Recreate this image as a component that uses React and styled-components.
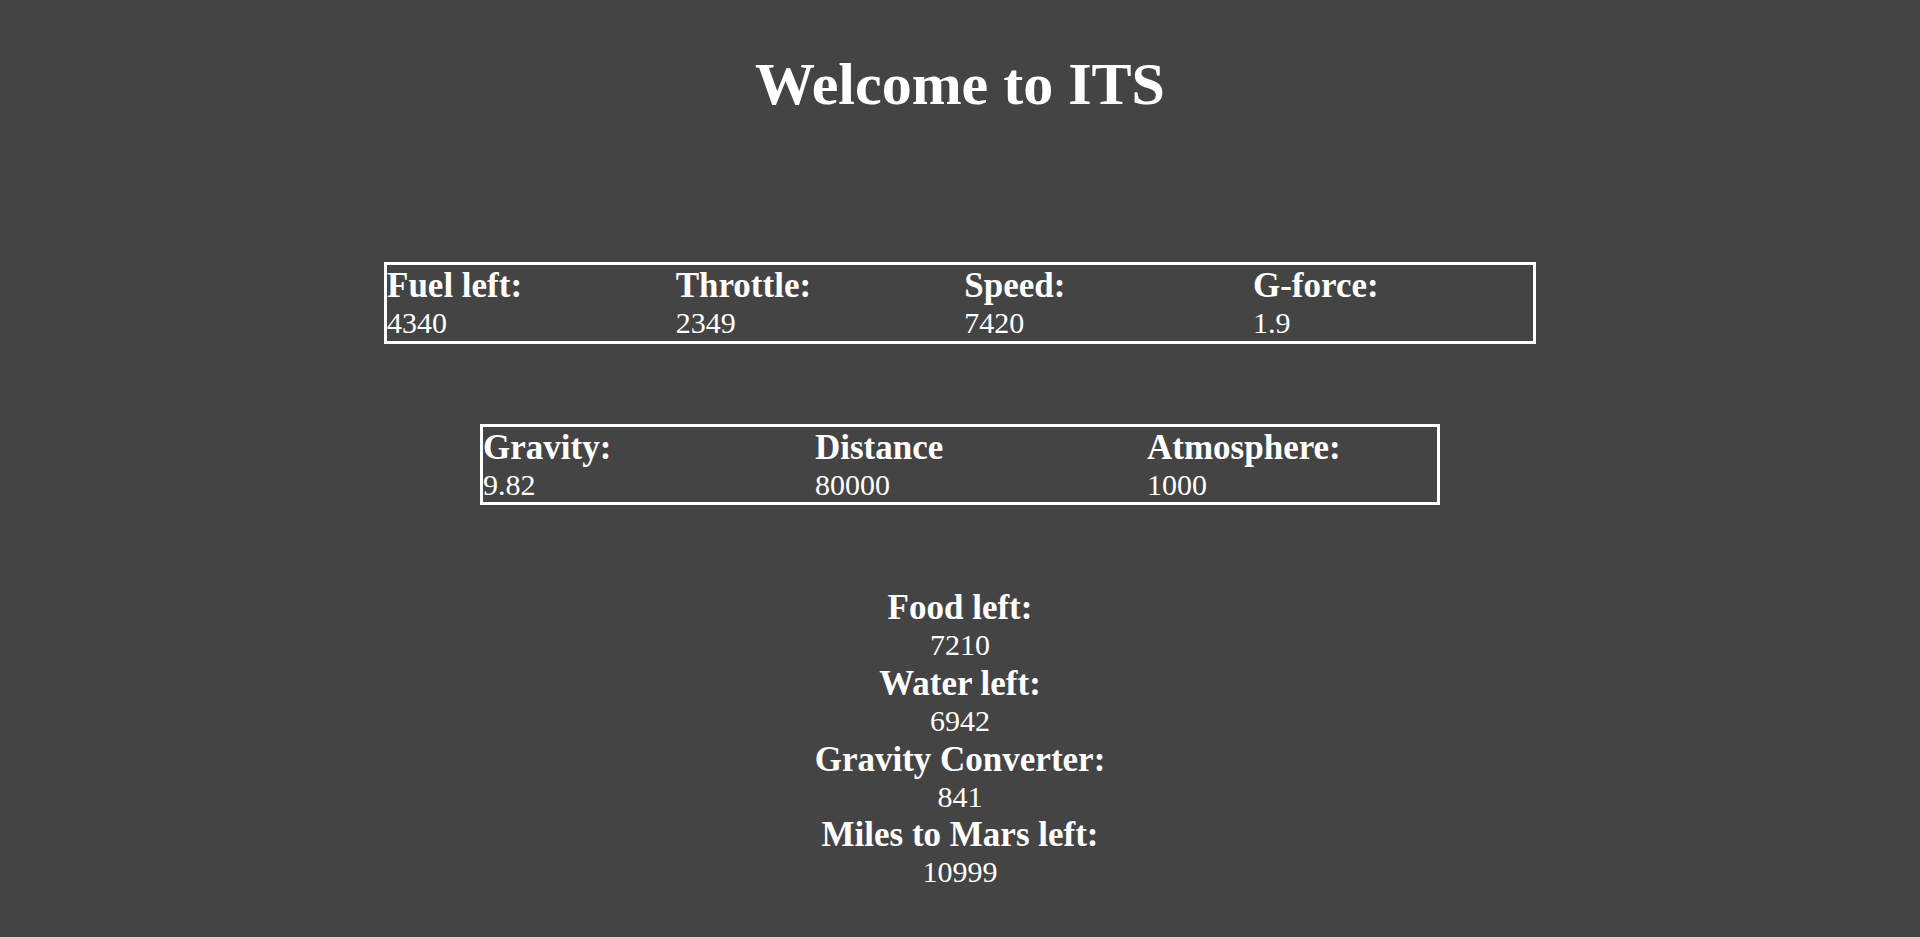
import React from 'react';
import styled, { createGlobalStyle } from 'styled-components';

const GlobalStyle = createGlobalStyle`
  html, body {
    margin: 0;
    padding: 0;
    background: #444444;
  }
  body {
    font-family: "Liberation Serif", "Times New Roman", serif;
    color: #ffffff;
  }
`;

const Page = styled.main`
  box-sizing: border-box;
  padding-top: 50px;
  display: flex;
  flex-direction: column;
  align-items: center;
`;

const Title = styled.h1`
  margin: 0;
  font-size: 60px;
  font-weight: 700;
  line-height: normal;
`;

const Panel = styled.section`
  box-sizing: border-box;
  width: ${(p) => p.$width};
  margin-top: ${(p) => p.$gap}px;
  border: 3px solid #ffffff;
  display: flex;
  justify-content: space-between;
`;

const Stat = styled.div`
  width: ${(p) => p.$w}px;
  display: flex;
  flex-direction: column;
  text-align: left;
`;

const Label = styled.div`
  font-weight: 700;
  font-size: 35px;
  line-height: 41px;
`;

const Value = styled.div`
  font-size: 30px;
  line-height: 34.5px;
`;

const Supplies = styled.section`
  margin-top: 82px;
  display: flex;
  flex-direction: column;
  align-items: center;
  text-align: center;

  & > ${Value} {
    line-height: 34.75px;
  }
`;

const flight = [
  { label: 'Fuel left:', value: '4340' },
  { label: 'Throttle:', value: '2349' },
  { label: 'Speed:', value: '7420' },
  { label: 'G-force:', value: '1.9' },
];

const environment = [
  { label: 'Gravity:', value: '9.82' },
  { label: 'Distance', value: '80000' },
  { label: 'Atmosphere:', value: '1000' },
];

const supplies = [
  { label: 'Food left:', value: '7210' },
  { label: 'Water left:', value: '6942' },
  { label: 'Gravity Converter:', value: '841' },
  { label: 'Miles to Mars left:', value: '10999' },
];

export default function App() {
  return (
    <>
      <GlobalStyle />
      <Page>
        <Title>Welcome to ITS</Title>
        <Panel $width="60%" $gap={143}>
          {flight.map((s) => (
            <Stat key={s.label} $w={280}>
              <Label>{s.label}</Label>
              <Value>{s.value}</Value>
            </Stat>
          ))}
        </Panel>
        <Panel $width="50%" $gap={80}>
          {environment.map((s) => (
            <Stat key={s.label} $w={290}>
              <Label>{s.label}</Label>
              <Value>{s.value}</Value>
            </Stat>
          ))}
        </Panel>
        <Supplies>
          {supplies.map((s) => (
            <React.Fragment key={s.label}>
              <Label>{s.label}</Label>
              <Value>{s.value}</Value>
            </React.Fragment>
          ))}
        </Supplies>
      </Page>
    </>
  );
}
